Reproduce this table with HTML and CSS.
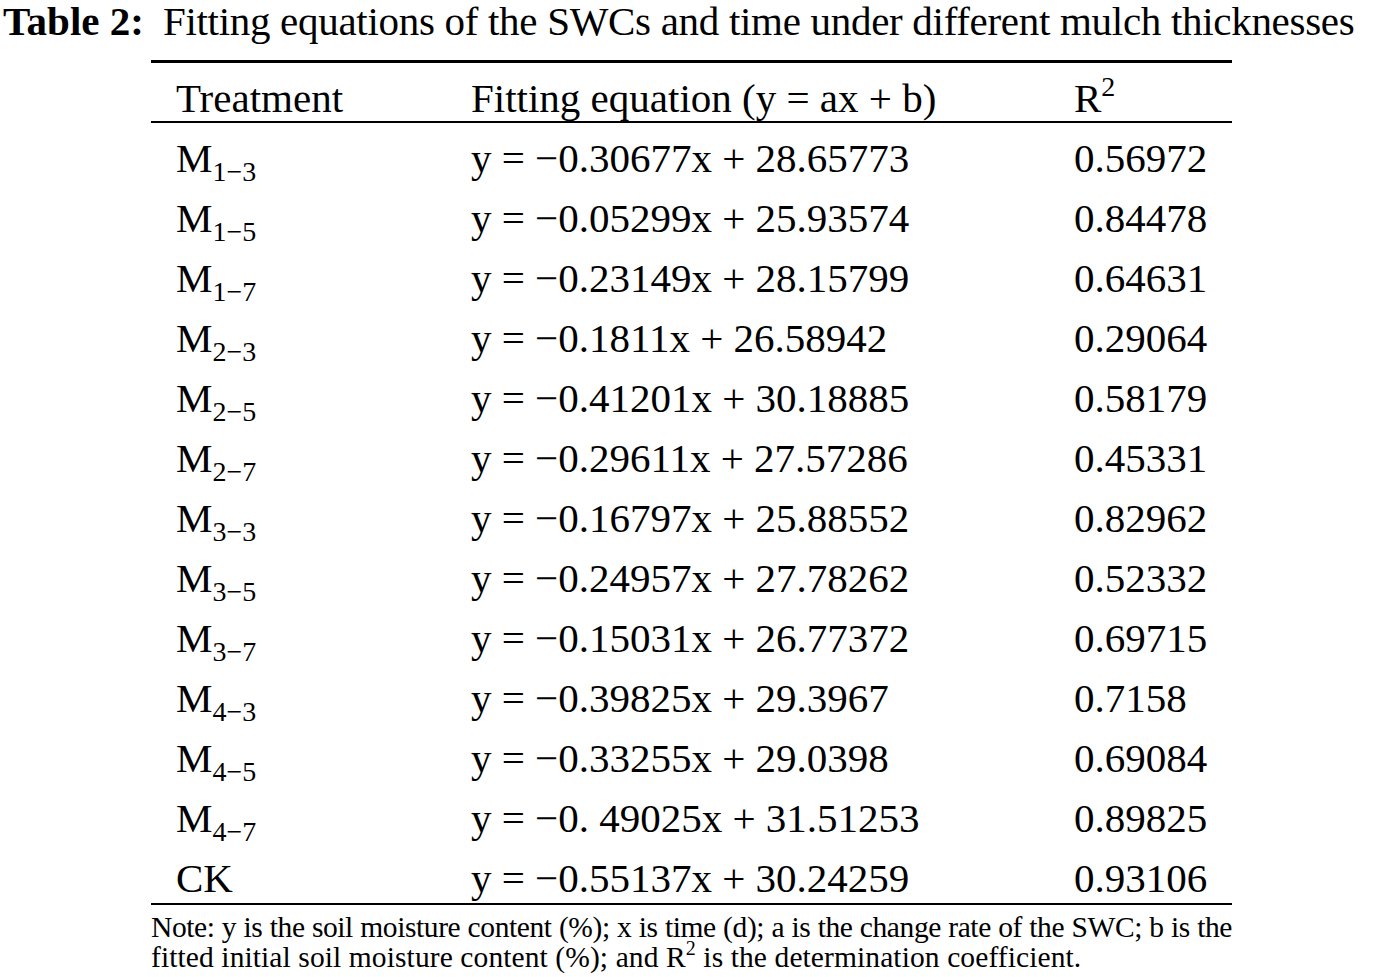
FILE: index.html
```html
<!DOCTYPE html>
<html>
<head>
<meta charset="utf-8">
<link rel="stylesheet" href="styles.css">
</head>
<body>
<h1 class="caption"><b class="label">Table 2:</b><span class="caption-text">Fitting equations of the SWCs and time under different mulch thicknesses</span></h1>
<table class="fit-table">
  <colgroup>
    <col class="c1"><col class="c2"><col class="c3">
  </colgroup>
  <thead>
    <tr><th class="first">Treatment</th><th>Fitting equation (y = ax + b)</th><th>R<sup class="sup">2</sup></th></tr>
  </thead>
  <tbody>
    <tr><td class="first">M<sub class="sub">1−3</sub></td><td>y = −0.30677x + 28.65773</td><td>0.56972</td></tr>
    <tr><td class="first">M<sub class="sub">1−5</sub></td><td>y = −0.05299x + 25.93574</td><td>0.84478</td></tr>
    <tr><td class="first">M<sub class="sub">1−7</sub></td><td>y = −0.23149x + 28.15799</td><td>0.64631</td></tr>
    <tr><td class="first">M<sub class="sub">2−3</sub></td><td>y = −0.1811x + 26.58942</td><td>0.29064</td></tr>
    <tr><td class="first">M<sub class="sub">2−5</sub></td><td>y = −0.41201x + 30.18885</td><td>0.58179</td></tr>
    <tr><td class="first">M<sub class="sub">2−7</sub></td><td>y = −0.29611x + 27.57286</td><td>0.45331</td></tr>
    <tr><td class="first">M<sub class="sub">3−3</sub></td><td>y = −0.16797x + 25.88552</td><td>0.82962</td></tr>
    <tr><td class="first">M<sub class="sub">3−5</sub></td><td>y = −0.24957x + 27.78262</td><td>0.52332</td></tr>
    <tr><td class="first">M<sub class="sub">3−7</sub></td><td>y = −0.15031x + 26.77372</td><td>0.69715</td></tr>
    <tr><td class="first">M<sub class="sub">4−3</sub></td><td>y = −0.39825x + 29.3967</td><td>0.7158</td></tr>
    <tr><td class="first">M<sub class="sub">4−5</sub></td><td>y = −0.33255x + 29.0398</td><td>0.69084</td></tr>
    <tr><td class="first">M<sub class="sub">4−7</sub></td><td>y = −0. 49025x + 31.51253</td><td>0.89825</td></tr>
    <tr><td class="first">CK</td><td>y = −0.55137x + 30.24259</td><td>0.93106</td></tr>
  </tbody>
</table>
<div class="note">
  <span class="note-line justified">Note: y is the soil moisture content (%); x is time (d); a is the change rate of the SWC; b is the</span>
  <span class="note-line last">fitted initial soil moisture content (%); and R<sup class="note-sup">2</sup> is the determination coefficient.</span>
</div>
</body>
</html>
```
FILE: styles.css
```css
html, body {
  margin: 0;
  padding: 0;
  background: #ffffff;
  color: #000000;
}
body {
  font-family: "Liberation Serif", "Times New Roman", serif;
  width: 1382px;
  height: 977px;
  overflow: hidden;
}
.caption {
  margin: 0 0 0 3px;
  font-size: 41px;
  line-height: 42px;
  font-weight: normal;
  white-space: nowrap;
}
.label {
  font-weight: bold;
  margin-right: 19px;
}
.caption-text {
  letter-spacing: -0.3px;
}
.fit-table {
  margin: 18px 0 0 151px;
  width: 1081px;
  border-collapse: collapse;
  table-layout: fixed;
  font-size: 41px;
}
.c1 { width: 320px; }
.c2 { width: 603px; }
.c3 { width: 158px; }
.fit-table thead tr {
  border-top: 3px solid #000;
  border-bottom: 2px solid #000;
}
.fit-table th {
  font-weight: normal;
  text-align: left;
  line-height: 46px;
  padding: 12px 0 0 0;
  white-space: nowrap;
}
.fit-table td {
  line-height: 48px;
  padding: 11px 0 1px 0;
  white-space: nowrap;
}
.fit-table tbody tr:last-child {
  border-bottom: 2px solid #000;
}
.fit-table .first {
  padding-left: 25px;
}
.sub {
  font-size: 28px;
  line-height: 0;
  vertical-align: -9px;
}
.sup {
  font-size: 28px;
  line-height: 0;
  vertical-align: 16px;
}
.note {
  margin: 7px 0 0 151px;
  width: 1081px;
  font-size: 29.5px;
  line-height: 30px;
  letter-spacing: -0.4px;
}
.note-line {
  display: block;
  white-space: nowrap;
}
.note-line.justified {
  white-space: normal;
  text-align: justify;
  text-align-last: justify;
}
.note-line.last {
  letter-spacing: 0.1px;
}
.note-sup {
  font-size: 20px;
  line-height: 0;
  vertical-align: 12px;
}
```
